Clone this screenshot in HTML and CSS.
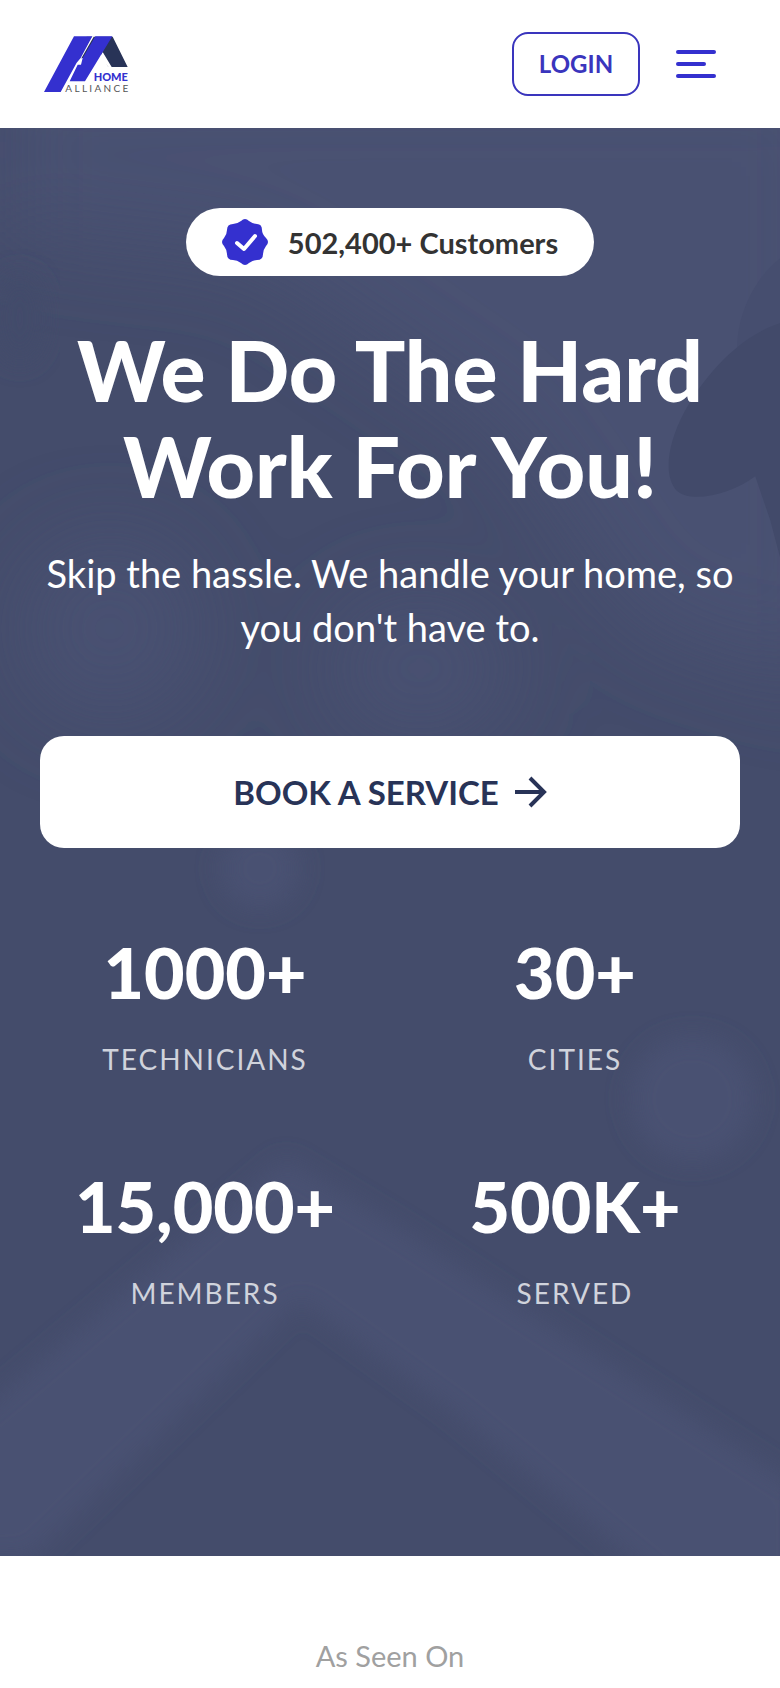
FILE: index.html
```
<!DOCTYPE html>
<html lang="en">
<head>
    <meta charset="UTF-8">
    <meta name="viewport" content="width=device-width, initial-scale=1">
    <title>Home Alliance</title>
    <link rel="stylesheet" href="styles.css">
</head>
<body>
<header class="header">
    <a href="#" class="logo" aria-label="Home Alliance">
        <svg viewBox="0 0 258 168" width="86" height="56">
            <path fill="#283357" d="M128 2h78L251 93H193L162 40 135 62 105 68z"/>
            <path fill="#fff" d="M144 1h6L107 76h-7zM168 62l8-14 27 45h-10z"/>
            <path fill="#3430cf" d="M90 1h55L110 66 98 80 50 168H0z"/>
            <path fill="#3430cf" d="M154 1h51L123 136H77L101 86h10L116 66z"/>
            <text class="logo-home" x="149" y="134">HOME</text>
            <text class="logo-alliance" x="64" y="168">ALLIANCE</text>
        </svg>
    </a>
    <div class="header-right">
        <button type="button" class="login">LOGIN</button>
        <button type="button" class="menu" aria-label="Menu">
            <span></span>
            <span class="short"></span>
            <span></span>
        </button>
    </div>
</header>

<section class="hero">
    <svg class="hero-bg" viewBox="0 0 780 1427" preserveAspectRatio="xMidYMid slice">
        <defs>
            <filter id="soft" x="-30%" y="-30%" width="160%" height="160%"><feGaussianBlur stdDeviation="12"/></filter>
            <filter id="wide" x="-40%" y="-40%" width="180%" height="180%"><feGaussianBlur stdDeviation="45"/></filter>
        </defs>
        <rect width="780" height="1427" fill="#444c6b"/>
        <g fill="#4a5172" filter="url(#wide)">
            <path d="M0 -60H840V560L640 500 500 300 250 130 0 100z"/>
            <ellipse cx="110" cy="500" rx="90" ry="90"/>
            <ellipse cx="420" cy="540" rx="90" ry="70"/>
        </g>
        <g fill="#495172" filter="url(#soft)">
            <circle cx="260" cy="740" r="40"/>
            <circle cx="692" cy="970" r="62"/>
            <path d="M285 1030L400 1100 800 1360V1460H670L450 1280 300 1172 30 1430H-40V1300z"/>
        </g>
        <ellipse cx="20" cy="190" rx="25" ry="45" fill="#434b6b" filter="url(#soft)"/>
        <path fill="#464e6f" d="M780 130C752 152 736 190 737 222L780 200z"/>
        <path fill="#424a6a" d="M780 195C738 208 704 248 684 284 666 318 664 348 676 362 690 376 732 366 755 348L770 392 780 430z"/>
    </svg>

    <div class="hero-inner">
        <div class="badge">
            <svg viewBox="0 0 46 46" width="46" height="46">
                <path fill="#3430cf" d="M19 2Q23-2 27 2Q31 5 35 5Q40 5 40 11Q40 15 44 19Q48 23 44 27Q41 31 41 35Q41 41 35 41Q31 41 27 44Q23 48 19 44Q15 41 11 41Q5 41 5 35Q5 31 2 27Q-2 23 2 19Q5 15 5 11Q5 5 11 5Q15 5 19 2z"/>
                <path fill="none" stroke="#fff" stroke-width="4" stroke-linecap="round" stroke-linejoin="round" d="M15 24l7 6 11-13"/>
            </svg>
            <span>502,400+ Customers</span>
        </div>
        <h1>We Do The Hard Work For You!</h1>
        <p class="lead">Skip the hassle. We handle your home, so you don't have to.</p>
        <a href="#" class="book">
            BOOK A SERVICE
            <svg viewBox="0 0 32 32" width="32" height="32">
                <path fill="none" stroke="#283357" stroke-width="4" d="M0 16h29M15 2l14 14-14 14"/>
            </svg>
        </a>
        <ul class="stats">
            <li><strong>1000+</strong><span>TECHNICIANS</span></li>
            <li><strong>30+</strong><span>CITIES</span></li>
            <li><strong>15,000+</strong><span>MEMBERS</span></li>
            <li><strong>500K+</strong><span>SERVED</span></li>
        </ul>
    </div>
</section>

<section class="seen">
    <h2>As Seen On</h2>
</section>
</body>
</html>
```

FILE: styles.css
```
* {
    margin: 0;
    padding: 0;
    box-sizing: border-box;
}

body {
    background: #fff;
    font-family: Lato, "Liberation Sans", sans-serif;
    color: #333;
}

a {
    text-decoration: none;
}

button {
    font-family: inherit;
    background: none;
    border: none;
    cursor: pointer;
}

svg {
    display: block;
}

.header {
    height: 128px;
    padding: 0 64px 0 44px;
    display: flex;
    align-items: center;
    justify-content: space-between;
}

.logo svg {
    overflow: visible;
}

.logo-home {
    font-size: 33px;
    font-weight: 900;
    fill: #3430cf;
}

.logo-alliance {
    font-size: 30px;
    letter-spacing: 7px;
    fill: #555;
}

.header-right {
    display: flex;
    align-items: center;
    gap: 36px;
}

.login {
    width: 128px;
    height: 64px;
    padding-bottom: 2px;
    border: 2px solid #3a35bd;
    border-radius: 16px;
    font-size: 24px;
    font-weight: bold;
    color: #3a35bd;
}

.menu {
    width: 40px;
    display: flex;
    flex-direction: column;
    gap: 8px;
}

.menu span {
    width: 100%;
    height: 4px;
    border-radius: 2px;
    background: #3430cf;
}

.menu .short {
    width: 30px;
}

.hero {
    position: relative;
    background: #464e6e;
    color: #fff;
    text-align: center;
}

.hero-bg {
    position: absolute;
    top: 0;
    left: 0;
    width: 100%;
    height: 100%;
}

.hero-inner {
    position: relative;
    padding: 80px 40px 238px;
}

.badge {
    display: inline-flex;
    align-items: center;
    gap: 20px;
    height: 68px;
    padding: 0 36px;
    border-radius: 34px;
    background: #fff;
    color: #333;
    font-size: 29px;
    font-weight: bold;
}

h1 {
    margin-top: 46px;
    font-size: 84px;
    line-height: 96px;
    font-weight: 900;
}

.lead {
    margin-top: 32px;
    font-size: 38px;
    line-height: 54px;
}

.book {
    margin-top: 82px;
    height: 112px;
    display: flex;
    align-items: center;
    justify-content: center;
    gap: 16px;
    border-radius: 24px;
    background: #fff;
    color: #283357;
    font-size: 33px;
    font-weight: bold;
}

.stats {
    margin-top: 84px;
    display: grid;
    grid-template-columns: 1fr 1fr;
    gap: 82px 40px;
    list-style: none;
}

.stats strong {
    display: block;
    font-size: 70px;
    line-height: 80px;
    font-weight: 900;
}

.stats span {
    display: block;
    margin-top: 22px;
    font-size: 28px;
    line-height: 50px;
    letter-spacing: 2px;
    color: #d0d3dc;
}

.seen {
    padding: 80px 40px;
    text-align: center;
}

.seen h2 {
    font-size: 29px;
    line-height: 40px;
    font-weight: normal;
    color: #a0a0a0;
}
```
